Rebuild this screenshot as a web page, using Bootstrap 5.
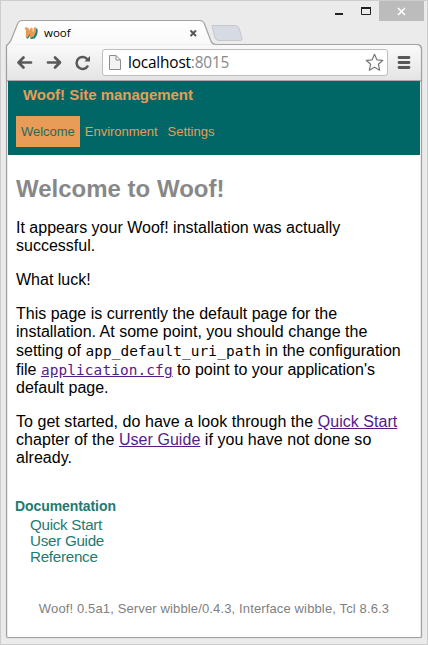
<!DOCTYPE html>
<html lang="en">
<head>
<meta charset="utf-8">
<meta name="viewport" content="width=device-width, initial-scale=1">
<title>woof</title>
<link rel="stylesheet" href="https://cdn.jsdelivr.net/npm/bootstrap@5.3.0/dist/css/bootstrap.min.css">
<style>
body{font-family:"Liberation Sans",Arial,sans-serif;font-size:16px;line-height:18px;color:#000}
.window{width:428px;height:645px;background:#ebebeb;border:1px solid #cdcdcd;overflow:hidden}
.titlebar{height:44px}
.tab-art{position:absolute;left:-1px;top:-1px;z-index:0}
.tab-label{font:12px/16px "Open Sans","Noto Sans",sans-serif;margin:24px 0 0 15px;height:16px}
.tab-title{width:137px;font-size:11.5px}
.controls{height:20px;margin-right:3px}
.close-box{width:45px;height:20px;background:#bcbcbc}
.frame{margin:0 5px 6px;border:1px solid #a0a0a0;border-width:0 1px 1px;box-shadow:0 0 1px #aaa;border-radius:0 5px 2px 2px}
.toolbar{height:36px;padding:4px 10px 0 9px;border-bottom:1px solid #aaa}
.omnibox{width:286px;height:27px;border:1px solid #bdbdbd;border-radius:3px;background:#fff;font:15.4px/24px "Open Sans","Noto Sans",sans-serif;letter-spacing:-.18px;margin-left:10px;padding:0 3px 0 6px}
.address{margin-left:7px}
.port{color:#888}
.page{margin:0 1px;background:#fff}
.site-head{height:74px;background:#066;color:#e89c58;padding:5px 8px 8px}
.site-name{font-size:15px;line-height:18px;padding-left:7px;letter-spacing:-.03px}
.site-nav{font-size:13px;line-height:31px;margin-top:12px;letter-spacing:-.02px}
.site-nav .nav-link{padding:0 5px;color:#e89c58;line-height:31px}
.site-nav .nav-link.active{background:#e89c58;color:#246b60}
.copy{padding:19px 8px 0;white-space:nowrap}
.copy h1{font-size:24px;line-height:30px;color:#888;margin-bottom:15px}
.copy p{margin-bottom:16px}
.copy a{color:#551a8b}
.copy code{font:14.4px/18px "DejaVu Sans Mono",monospace;color:inherit;letter-spacing:.12px}
.copy .code-line{display:block;line-height:19px}
.copy .closing{letter-spacing:.045px}
.docs{padding:30px 7px 0;color:#1f7a70}
.docs h2{font-size:14px;line-height:18px;margin:0;letter-spacing:-.08px}
.docs li{line-height:16px;padding-left:15px;font-size:15.2px;letter-spacing:-.28px}
.docs ul{padding-top:2px}
.foot{font-size:13px;color:#808080;line-height:16px;margin-top:36px;letter-spacing:.135px}
</style>
<script src="https://cdn.jsdelivr.net/npm/bootstrap@5.3.0/dist/js/bootstrap.bundle.min.js"></script>
</head>
<body class="m-0">
<div class="window position-relative d-flex flex-column">
  <svg class="tab-art" width="428" height="82" viewBox="0 0 428 82">
    <defs><linearGradient id="chrome" x1="0" y1="0" x2="0" y2="1"><stop offset="0" stop-color="#fff"/><stop offset=".45" stop-color="#f8f8f8"/><stop offset="1" stop-color="#e3e3e3"/></linearGradient></defs>
    <path d="M212 25.5H235Q238 25.5 239 28L242 38Q242.500 40.500 240 40.500H219Q216 40.500 215 38Z" fill="#d6dbe3" stroke="#c4c7cc"/>
    <path d="M6.500 82V47Q6.500 45 8.500 43.500Q10.500 42 11.500 39L17.500 24Q19 20.500 22 20.500H200Q203 20.500 204.500 24L210.500 40Q212 44.500 216 44.500H417Q421.500 44.500 421.500 49V82Z" fill="url(#chrome)" stroke="#a2a2a2" stroke-width="1.200"/>
  </svg>
  <header class="titlebar d-flex justify-content-between position-relative flex-shrink-0">
    <div class="tab-label d-flex align-items-center">
      <svg class="ms-2" width="20" height="14" viewBox="0 0 20 14" fill="none" stroke-linecap="round" stroke-linejoin="round">
        <path d="M3.500 4L3.300 11.500L7.500 6L7.300 12L10 11.500Q13 8 12.500 3.500" stroke="#1c8078" stroke-width="2.200"/>
        <path d="M2 2.500L3.500 3L3 10.200L7.500 3L7 10.500Q10.500 9 11 2.500" stroke="#ed9950" stroke-width="2.400"/>
      </svg>
      <span class="tab-title">woof</span>
      <svg class="ms-2" width="9" height="9" viewBox="0 0 9 9"><path d="M1.500 1.500L7 7M7 1.500L1.500 7" stroke="#555" stroke-width="1.900"/></svg>
    </div>
    <div class="controls d-flex">
      <svg width="45" height="20" viewBox="0 0 45 20"><path d="M1 13h8" stroke="#222" stroke-width="2"/><path d="M27.500 7v6.500h9V7Z" fill="none" stroke="#222"/><path d="M27 7h10" stroke="#222" stroke-width="2"/></svg>
      <div class="close-box d-flex align-items-center justify-content-center"><svg width="9" height="9" viewBox="0 0 9 9"><path d="M1 1L8 8M8 1L1 8" stroke="#fff" stroke-width="1.700"/></svg></div>
    </div>
  </header>
  <div class="frame position-relative flex-grow-1 d-flex flex-column">
    <div class="toolbar d-flex">
      <svg width="76" height="26" viewBox="0 0 76 26" fill="none" stroke="#595959" stroke-width="2.700" stroke-linecap="round" stroke-linejoin="round">
        <path d="M15 13.500H3M7.500 8.500L2.500 13.500L7.500 18.500"/>
        <path d="M32 13.500H43M39 8.500L44 13.500L39 18.500"/>
        <path d="M71.500 10.500A6 6 0 1 0 72 16.500" stroke-width="2.500" stroke-linecap="butt"/><path d="M74 7V12.500H68.500Z" fill="#595959" stroke-width="0"/>
      </svg>
      <div class="omnibox d-flex align-items-center">
        <svg width="12" height="15" viewBox="0 0 12 15" fill="#f3f3f3" stroke="#8c8c8c"><path d="M.5.500H7L11.500 5V14.500H.5ZM7 .500V5H11.500"/></svg>
        <span class="address">localhost<span class="port">:8015</span></span>
        <svg class="ms-auto" width="19" height="19" viewBox="0 0 19 19"><path d="M9.500 1.300L11.900 6.800L17.800 7.300L13.400 11.300L14.700 17.200L9.500 14.200L4.300 17.200L5.600 11.300L1.200 7.300L7.100 6.800Z" fill="#fff" stroke="#777" stroke-width="1.200" stroke-linejoin="round"/></svg>
      </div>
      <svg class="ms-auto" width="14" height="26" viewBox="0 0 14 26"><path d="M2 8.500h10M2 13.500h10M2 18.500h10" stroke="#595959" stroke-width="2.800" stroke-linecap="round"/></svg>
    </div>
    <main class="page flex-grow-1">
      <div class="site-head">
        <div class="site-name fw-bold">Woof! Site management</div>
        <nav class="nav site-nav flex-nowrap">
          <a class="nav-link active" href="#">Welcome</a>
          <a class="nav-link" href="#">Environment</a>
          <a class="nav-link" href="#">Settings</a>
        </nav>
      </div>
      <article class="copy">
        <h1 class="fw-bold">Welcome to Woof!</h1>
        <p>It appears your Woof! installation was actually<br>successful.</p>
        <p>What luck!</p>
        <p>This page is currently the default page for the<br>installation. At some point, you should change the
          <span class="code-line">setting of <code>app_default_uri_path</code> in the configuration</span>
          <span class="code-line">file <a href="#"><code>application.cfg</code></a> to point to your application's</span>
          default page.</p>
        <p class="closing mb-0">To get started, do have a look through the <a href="#">Quick Start</a><br>chapter of the <a href="#">User Guide</a> if you have not done so<br>already.</p>
      </article>
      <section class="docs">
        <h2 class="fw-bold">Documentation</h2>
        <ul class="list-unstyled mb-0"><li>Quick Start</li><li>User Guide</li><li>Reference</li></ul>
      </section>
      <footer class="foot text-center">Woof! 0.5a1, Server wibble/0.4.3, Interface wibble, Tcl 8.6.3</footer>
    </main>
  </div>
</div>
</body>
</html>
